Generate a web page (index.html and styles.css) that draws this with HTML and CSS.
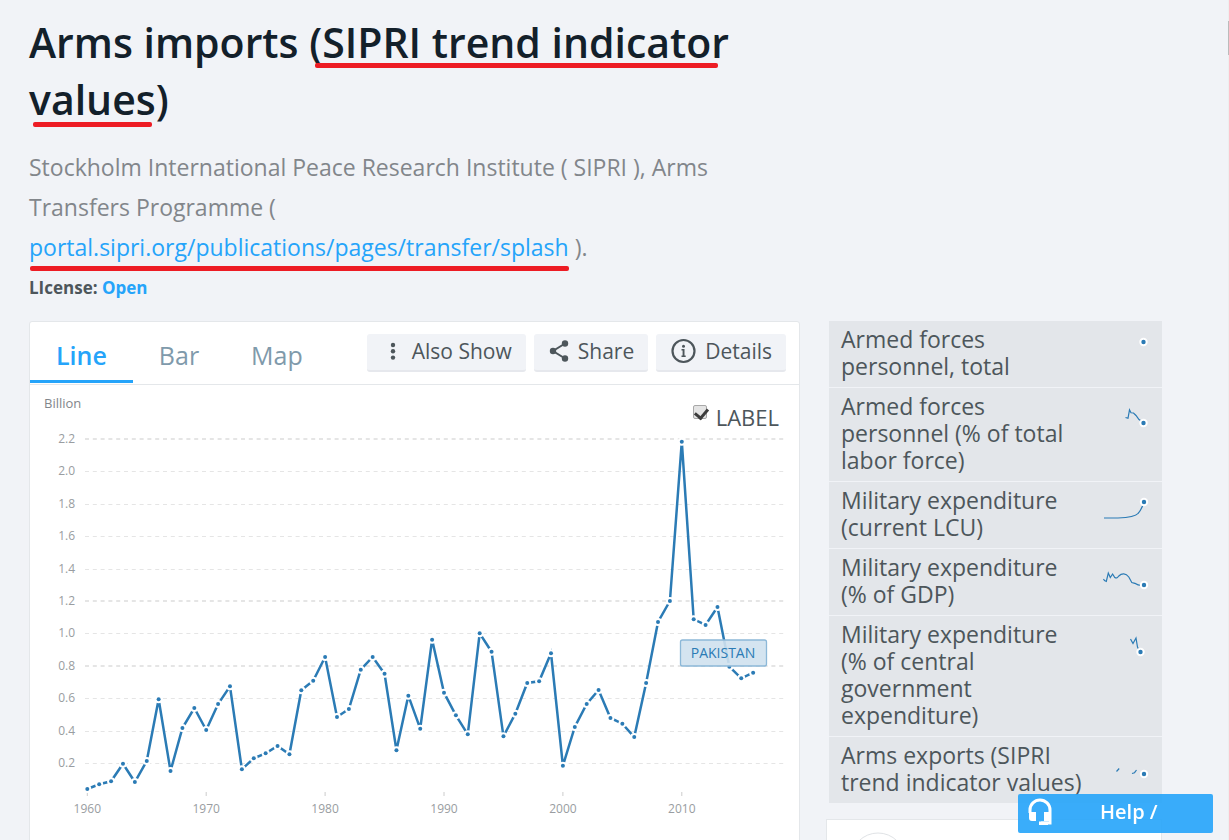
FILE: index.html
```
<!DOCTYPE html>
<html lang="en">
<head>
<meta charset="utf-8">
<title>Arms imports (SIPRI trend indicator values)</title>
<link rel="stylesheet" href="styles.css">
</head>
<body>
<div class="page">
  <header class="intro">
    <h1 class="title">Arms imports (<span class="marked mark-a">SIPRI trend indicator</span> <span class="marked mark-b">values</span>)</h1>
    <p class="source">Stockholm International Peace Research Institute ( SIPRI ), Arms Transfers Programme ( <a class="marked mark-c" href="#">portal.sipri.org/publications/pages/transfer/splash</a> ).</p>
    <p class="license">LIcense: <a href="#">Open</a></p>
  </header>
  <main class="columns">
    <section class="panel">
      <div class="toolbar">
        <nav class="tabs">
          <a class="tab active" href="#">Line</a>
          <a class="tab" href="#">Bar</a>
          <a class="tab" href="#">Map</a>
        </nav>
        <div class="actions">
          <button class="btn btn-more" type="button"><svg width="12" height="20" viewBox="0 0 12 20" fill="#4d565b"><circle cx="6" cy="4" r="2.2"/><circle cx="6" cy="10.3" r="2.2"/><circle cx="6" cy="16.6" r="2.2"/></svg>Also Show</button>
          <button class="btn" type="button"><svg width="20" height="22" viewBox="0 0 20 22" fill="#4d565b"><path d="M16 3.5 4 11l12 7.5" fill="none" stroke="#4d565b" stroke-width="2"/><circle cx="16" cy="3.5" r="3.2"/><circle cx="4" cy="11" r="3.2"/><circle cx="16" cy="18.5" r="3.2"/></svg>Share</button>
          <button class="btn" type="button"><svg width="25" height="26" viewBox="0.5 0 25 26" fill="#4d565b"><circle cx="13" cy="13" r="11" fill="none" stroke="#4d565b" stroke-width="2.2"/><circle cx="13" cy="8.2" r="1.5"/><path d="M11 11h3v6.500h1.200V19H11v-1.500h1.100v-5H11z"/></svg>Details</button>
        </div>
      </div>
      <div class="chart-head">
        <span class="unit">Billion</span>
        <label class="toggle"><input type="checkbox" checked>LABEL</label>
      </div>
      <svg class="chart" viewBox="30 430 769 430" id="chart"></svg>
    </section>
    <aside class="side">
      <ul class="related">
        <li><a href="#">Armed forces personnel, total</a>
          <svg width="60" height="40" viewBox="1096 321 60 40"><circle class="end" cx="1143.500" cy="342" r="3.200"/></svg></li>
        <li><a href="#">Armed forces personnel (% of total labor force)</a>
          <svg width="60" height="50" viewBox="1096 388 60 50"><path d="M1125.500 417.500l2.500.8 1.500-8.500 1.500 3 2.500.2 2.500 2.500 3 4 4.500 3"/><circle class="end" cx="1143.500" cy="423" r="3.200"/></svg></li>
        <li><a href="#">Military expenditure (current LCU)</a>
          <svg width="60" height="50" viewBox="1096 482 60 50"><path d="M1104 518h14c12-.5 18-2 20-4.500 3-3 4.500-7 6-11.500"/><circle class="end" cx="1144" cy="502" r="3.200"/></svg></li>
        <li><a href="#">Military expenditure (% of GDP)</a>
          <svg width="60" height="50" viewBox="1096 549 60 50"><path d="M1103.500 579l1 1.500 1.800.8 2-8.300 2 4.500 2.300-3.500 2.200 3.500q2 1.500 4-1.500c3-3 7-3 10 1l3 5.500 3 .8q3 2.500 9 2.200"/><circle class="end" cx="1144" cy="585" r="3.200"/></svg></li>
        <li><a href="#">Military expenditure (% of central government expenditure)</a>
          <svg width="60" height="50" viewBox="1096 616 60 50"><path d="M1130.500 639l2.500 4.500 3-5.500 1.500 9 2.500 5"/><circle class="end" cx="1140.500" cy="652" r="3.200"/></svg></li>
        <li><a href="#">Arms exports (SIPRI trend indicator values)</a>
          <svg width="60" height="50" viewBox="1096 737 60 50"><path d="M1116.500 771.500l2.700-3M1132 773.500l2.500-.8 2-2.700"/><circle class="end" cx="1144" cy="774" r="3.200"/></svg></li>
      </ul>
      <div class="card">
        <svg width="56" height="56" viewBox="0 0 56 56"><circle cx="28" cy="28" r="27" fill="none" stroke="#e0e3e6"/></svg>
      </div>
    </aside>
  </main>
</div>
<div class="scroll-edge"><div class="scroll-thumb"></div></div>
<button class="help" type="button"><svg width="24" height="28" viewBox="0 0 24 28"><path d="M2 15v-3a10 10 0 0 1 20 0v13h-9" fill="none" stroke="#fff" stroke-width="3"/><path d="M1 14h7v9H4q-3 0-3-3zM16 14h7v9h-7zM11 23.500h9v3.500h-9z" fill="#fff"/></svg><span>Help /</span></button>
<script src="chart.js"></script>
</body>
</html>
```
FILE: styles.css
```
* { box-sizing: border-box; }
html, body { height: 100%; }
body {
  margin: 0;
  background: #f1f3f7;
  color: #4d565b;
  font-family: "Open Sans", "Noto Sans", sans-serif;
  overflow: hidden;
}
a { color: #25a4fa; text-decoration: none; }
.page { padding: 14px 67px 0 29px; }
.intro { max-width: 730px; }
.title {
  margin: 0;
  color: #13202a;
  font-size: 41px;
  font-weight: 600;
  line-height: 57px;
}
.source {
  margin: 19px 0 0;
  color: #82868b;
  font-size: 23px;
  line-height: 40px;
}
.license { margin: 8px 0 0; font-size: 17px; font-weight: 700; line-height: 25px; }
.marked { position: relative; white-space: nowrap; }
.marked::after {
  content: "";
  position: absolute;
  height: 5px;
  border-radius: 2px;
  background: #ed1c24;
}
.mark-a::after { left: -7px; right: 11px; bottom: 2px; }
.mark-b::after { left: 4px; right: 4px; bottom: 0; }
.mark-c::after { left: 1px; right: 0; bottom: -8px; }

.columns {
  display: grid;
  grid-template-columns: minmax(0, 771fr) minmax(0, 336fr);
  gap: 26px;
  align-items: start;
  margin-top: 21px;
}
.panel { background: #fff; border: 1px solid #e4e7ea; border-radius: 3px; }
.toolbar {
  display: flex;
  justify-content: space-between;
  height: 63px;
  border-bottom: 1px solid #e4e7ea;
}
.tabs { display: flex; }
.tab {
  padding: 15px 26px 0;
  height: 61px;
  color: #7f9aab;
  font-size: 25px;
  line-height: 36px;
}
.tab.active { color: #25a4fa; font-weight: 600; border-bottom: 3px solid #25a4fa; }
.actions { display: flex; gap: 8px; padding: 12px 13px 0 0; }
.btn {
  display: flex;
  align-items: center;
  gap: 9px;
  height: 38px;
  padding: 0 14px 2px 15px;
  border: 0;
  border-bottom: 2px solid #e6e8ed;
  border-radius: 3px;
  background: #f1f3f7;
  color: #4d565b;
  font: 21px "Open Sans", "Noto Sans", sans-serif;
}
.btn-more { gap: 13px; padding-left: 20px; }
.chart-head {
  display: flex;
  justify-content: space-between;
  height: 45px;
  padding: 8px 20px 0 14px;
}
.unit { color: #82868b; font-size: 13px; line-height: 20px; }
.toggle { display: flex; gap: 9px; font-size: 22px; line-height: 48px; }
.toggle input {
  appearance: none;
  width: 14px;
  height: 14px;
  margin: 12px 0 0;
  border: 1px solid #a8a8a8;
  border-radius: 2px;
  background: #e4e4e4;
}
.toggle input:checked::after {
  content: "";
  display: block;
  width: 6px;
  height: 10px;
  margin: 0 0 0 3px;
  border: solid #3c3c3c;
  border-width: 0 3px 3px 0;
  transform: rotate(40deg);
}
.chart { display: block; width: 100%; }
.grid-line { stroke: #e5e5e5; stroke-dasharray: 4 3.8; }
.tick { stroke: #ccc; }
.chart text { fill: #999da1; font-size: 12px; }
.series { fill: none; stroke: #2b7bb5; stroke-width: 2.5; }
.halo { fill: #fff; }
.dot { fill: #2b7bb5; }
.tag { fill: #cfe1ee; fill-opacity: 0.9; stroke: #8cb8d8; stroke-width: 1.3; }
.chart .tag-text { fill: #2b7bb5; font-size: 14px; }

.related { list-style: none; margin: 0 0 15px 3px; padding: 0; }
.related li {
  display: flex;
  justify-content: space-between;
  align-items: flex-start;
  padding: 0 6px 0 12px;
  border-bottom: 1px solid #f1f3f7;
  background: #e3e6ea;
}
.related a {
  width: 244px;
  padding: 5px 0 7px;
  color: #4d565b;
  font-size: 23px;
  line-height: 27px;
}
.related svg { flex: none; }
.related path { fill: none; stroke: #2b7bb5; stroke-width: 1.2; }
.end { fill: #2b7bb5; stroke: #fff; stroke-width: 2; }
.card { padding: 12px 23px; border: 1px solid #e4e7ea; background: #fff; }

.help {
  position: fixed;
  right: 16px;
  bottom: 7px;
  display: flex;
  align-items: center;
  width: 195px;
  height: 39px;
  padding: 0 10px 4px;
  border: 0;
  border-radius: 2px;
  background: rgba(37, 164, 250, 0.9);
  color: #fff;
  font: 600 20px "Open Sans", "Noto Sans", sans-serif;
}
.help span { margin-left: 48px; }
.scroll-edge { position: fixed; top: 0; right: 0; bottom: 0; width: 1px; background: #eee; }
.scroll-thumb { height: 34px; margin-top: 21px; background: #bbb; }
```
FILE: chart.js
```
const svg = document.getElementById("chart");
const START_X = 87.3;
const STEP = 11.89;
const heights = [
  789, 784.3, 781.3, 763.7, 782, 761, 699.3, 771, 728, 708,
  730, 704, 686.3, 769.3, 758.3, 753.3, 746, 754.3, 690.3, 680.7,
  657, 717, 709, 669.7, 657, 673.7, 750.3, 695.7, 728.7, 639.7,
  692.7, 715.3, 734.3, 633.3, 651.7, 736.3, 713.7, 683, 681.3, 653.3,
  765.7, 727, 704, 690, 718, 723.7, 737, 683, 622, 601,
  441.7, 619.3, 625, 607, 666.7, 678.3, 672.7
];

function add(tag, attrs, text) {
  const el = document.createElementNS("http://www.w3.org/2000/svg", tag);
  for (const key in attrs) el.setAttribute(key, attrs[key]);
  if (text) el.textContent = text;
  svg.appendChild(el);
}

for (let i = 0; i <= 10; i++) {
  const y = Math.round(439 + i * 32.4);
  const wide = i === 0 || i === 5 || i === 7;
  add("line", { class: "grid-line", x1: 85, x2: 784, y1: wide ? y : y + 0.5, y2: wide ? y : y + 0.5, "stroke-width": wide ? 2 : 1 });
  add("text", { x: 75, y: y + 4, "text-anchor": "end" }, (2.2 - i * 0.2).toFixed(1));
}
for (let i = 0; i <= 5; i++) {
  const x = START_X + i * 10 * STEP;
  add("line", { class: "tick", x1: x, x2: x, y1: 792, y2: 796 });
  add("text", { x: x, y: 813, "text-anchor": "middle" }, String(1960 + i * 10));
}
const points = heights.map((y, i) => [START_X + i * STEP, y]);
add("polyline", { class: "series", points: points.join(" ") });
for (const [x, y] of points) {
  add("circle", { class: "halo", cx: x, cy: y, r: 4 });
  add("circle", { class: "dot", cx: x, cy: y, r: 2 });
}
add("rect", { class: "tag", x: 680.5, y: 640, width: 86, height: 26, rx: 2 });
add("text", { class: "tag-text", x: 723, y: 658, "text-anchor": "middle" }, "PAKISTAN");
```
